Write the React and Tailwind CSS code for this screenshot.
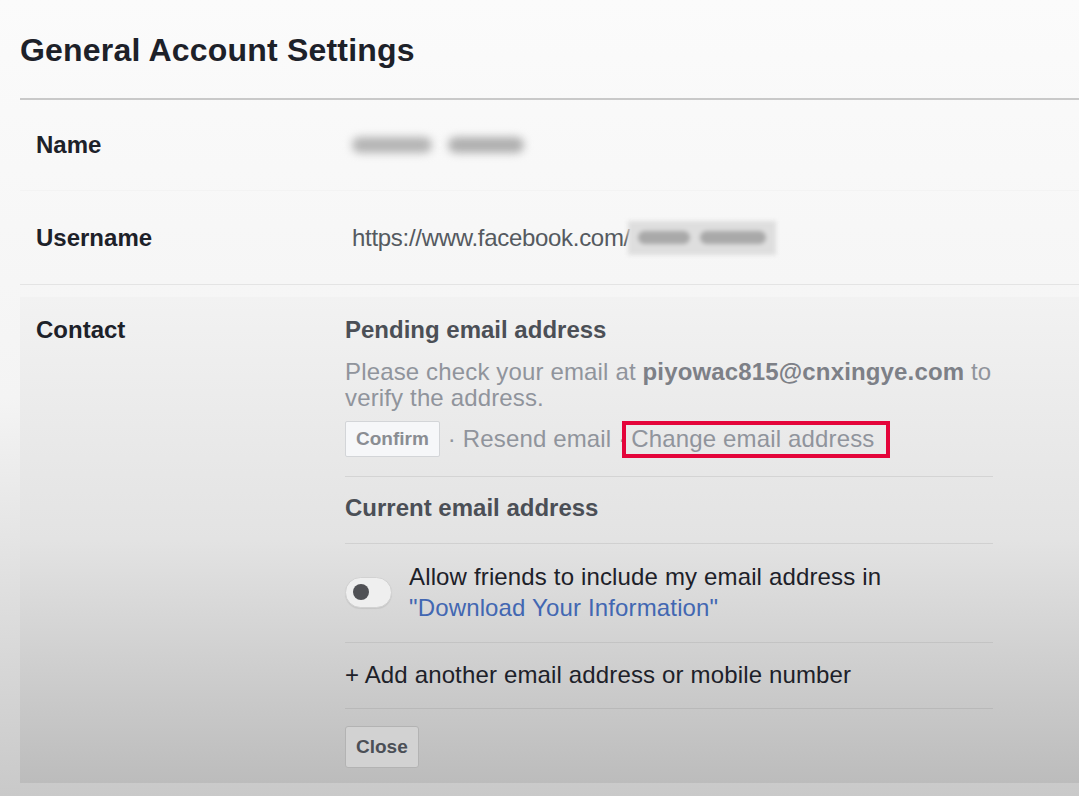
import React from "react";

function Blur({ className }) {
  return <div className={className} />;
}

export default function App() {
  return (
    <div className="min-h-[796px] w-full overflow-hidden bg-linear-to-b from-[#fbfbfb] via-[#f4f4f4] to-[#c9c9c9] pl-[20px] font-['Liberation_Sans',Arial,sans-serif] text-[#1d2129]">
      {/* Header */}
      <div className="flex h-[100px] items-center border-b-2 border-[#c9c9c9] pt-[2px]">
        <h1 className="text-[32px] leading-[32px] font-bold tracking-[0.2px] text-[#1d2129]">
          General Account Settings
        </h1>
      </div>

      {/* Name row */}
      <div className="flex h-[91px] items-center border-b border-[#f3f3f3] pl-[16px]">
        <div className="w-[316px] text-[24px] leading-[26px] font-bold">Name</div>
        <div className="flex items-center gap-[16px]">
          <Blur className="h-[16px] w-[80px] rounded-full bg-[#b4b4b4] blur-[4px]" />
          <Blur className="h-[16px] w-[76px] rounded-full bg-[#afafaf] blur-[4px]" />
        </div>
      </div>

      {/* Username row */}
      <div className="flex h-[94px] items-center border-b border-[#e4e4e4] pl-[16px]">
        <div className="w-[316px] text-[24px] leading-[26px] font-bold">Username</div>
        <div className="flex items-center text-[24px] leading-[26px] tracking-[-0.3px] text-[#555a60]">
          <span>https://www.facebook.com/</span>
          <div className="-ml-[2px] flex h-[34px] w-[148px] items-center justify-center gap-[10px] bg-[#dedede] blur-[2px]">
            <div className="h-[13px] w-[52px] rounded-full bg-[#a9a9a9]" />
            <div className="h-[13px] w-[66px] rounded-full bg-[#a9a9a9]" />
          </div>
        </div>
      </div>

      {/* Contact section */}
      <div className="mt-[12px] flex bg-linear-to-b from-[#f2f2f2] via-[#e3e3e3] to-[#bcbcbc] pl-[16px] pt-[20px] pb-[15px] tracking-[0.15px]">
        <div className="w-[309px] text-[24px] leading-[26px] font-bold tracking-normal">Contact</div>
        <div className="w-[648px]">
          <div className="border-b border-black/[0.08] pb-[19px]">
            <div className="mb-[16px] text-[24px] leading-[26px] font-bold tracking-normal text-[#4b4f56]">
              Pending email address
            </div>
            <div className="text-[24px] leading-[26px] text-[#90949c]">
              Please check your email at{" "}
              <span className="font-bold text-[#7d8087]">piyowac815@cnxingye.com</span> to verify the address.
            </div>
            <div className="mt-[10px] flex h-[36px] items-center text-[24px] text-[#90949c]">
              <span className="flex h-[36px] items-center rounded-[2px] border border-[#d3d5d8] bg-[#f6f7f9] px-[10px] text-[19px] font-bold tracking-normal text-[#8a8d93]">
                Confirm
              </span>
              <span className="ml-[8px]">· Resend email ·</span>
              <span className="relative -ml-[4px] flex h-[37px] items-center border-[4px] border-[#e4043a] pl-[5px] pr-[12px]">
                Change email address
              </span>
            </div>
          </div>

          <div className="border-b border-black/[0.08] pt-[18px] pb-[22px] text-[24px] leading-[26px] font-bold tracking-normal text-[#4b4f56]">
            Current email address
          </div>

          <div className="flex items-center border-b border-black/[0.07] pt-[17px] pb-[19px]">
            <div className="flex h-[31px] w-[47px] items-center rounded-full border border-[#d2d2d2] bg-[#efefef] pl-[7px] shadow-[0_1px_1px_rgba(0,0,0,0.08)]">
              <div className="h-[16px] w-[16px] rounded-full bg-[#505155]" />
            </div>
            <div className="ml-[17px] text-[24px] leading-[31px] text-[#1d2129]">
              <div>Allow friends to include my email address in</div>
              <div className="text-[#4267b2]">"Download Your Information"</div>
            </div>
          </div>

          <div className="border-b border-black/[0.07] pt-[19px] pb-[20px] text-[24px] leading-[26px] text-[#1d2129]">
            + Add another email address or mobile number
          </div>

          <div className="pt-[17px]">
            <button className="flex h-[42px] items-center rounded-[3px] border border-[#b3b3b3] bg-[#d2d2d2] px-[10px] text-[19px] font-bold tracking-normal text-[#4b4f56]">
              Close
            </button>
          </div>
        </div>
      </div>
    </div>
  );
}
